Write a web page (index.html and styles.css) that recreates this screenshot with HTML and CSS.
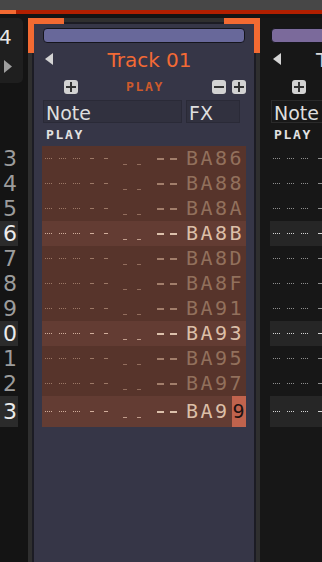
FILE: index.html
```html
<!DOCTYPE html>
<html lang="en">
<head>
    <meta charset="UTF-8">
    <meta name="viewport" content="width=device-width, initial-scale=1.0">
    <title>Tracker</title>
    <link rel="stylesheet" href="styles.css">
</head>
<body>
    <header class="topbar">
        <div class="topbar-fill"></div>
        <div class="topbar-line"><div class="topbar-mark"></div></div>
    </header>
    <main class="main">
        <div class="side">
            <div class="pos-box">
                <div class="pos-num">4</div>
                <svg class="pos-play" width="8" height="13" viewBox="0 0 8 13"><polygon points="0,0 8,6.5 0,13" fill="#9e9e9e"/></svg>
            </div>
            <div class="nums">
                <div class="num">3</div>
                <div class="num">4</div>
                <div class="num">5</div>
                <div class="num hl">6</div>
                <div class="num">7</div>
                <div class="num">8</div>
                <div class="num">9</div>
                <div class="num hl">0</div>
                <div class="num">1</div>
                <div class="num">2</div>
                <div class="num hl last">3</div>
            </div>
        </div>

        <section class="track active">
            <span class="corner left"></span>
            <span class="corner right"></span>
            <div class="track-body">
                <div class="track-color"></div>
                <div class="track-title">
                    <svg class="arrow" width="8" height="12" viewBox="0 0 8 12"><polygon points="8,0 0,6 8,12" fill="#d4d4d4"/></svg>
                    <span class="track-name">Track 01</span>
                </div>
                <div class="track-btns">
                    <svg class="btn" width="14" height="14" viewBox="0 0 14 14"><rect width="14" height="14" rx="3" fill="#d2d2d2"/><path d="M2 7h10M7 2v10" stroke="#333" stroke-width="2"/></svg>
                    <span class="state">PLAY</span>
                    <span class="btn-group">
                        <svg class="btn" width="14" height="14" viewBox="0 0 14 14"><rect width="14" height="14" rx="3" fill="#d2d2d2"/><path d="M2 7h10" stroke="#333" stroke-width="2"/></svg>
                        <svg class="btn" width="14" height="14" viewBox="0 0 14 14"><rect width="14" height="14" rx="3" fill="#d2d2d2"/><path d="M2 7h10M7 2v10" stroke="#333" stroke-width="2"/></svg>
                    </span>
                </div>
                <div class="cols">
                    <div class="col-head note">Note</div>
                    <div class="col-head effect">FX</div>
                </div>
                <div class="play-label">PLAY</div>
                <div class="pattern">
                    <div class="row"><span class="dots"></span><span class="dots"></span><span class="dots"></span><span class="dash"></span><span class="dash"></span><span class="low"></span><span class="low"></span><span class="fxd"></span><span class="fxd"></span><span class="hex">BA86</span></div>
                    <div class="row"><span class="dots"></span><span class="dots"></span><span class="dots"></span><span class="dash"></span><span class="dash"></span><span class="low"></span><span class="low"></span><span class="fxd"></span><span class="fxd"></span><span class="hex">BA88</span></div>
                    <div class="row"><span class="dots"></span><span class="dots"></span><span class="dots"></span><span class="dash"></span><span class="dash"></span><span class="low"></span><span class="low"></span><span class="fxd"></span><span class="fxd"></span><span class="hex">BA8A</span></div>
                    <div class="row hl"><span class="dots"></span><span class="dots"></span><span class="dots"></span><span class="dash"></span><span class="dash"></span><span class="low"></span><span class="low"></span><span class="fxd"></span><span class="fxd"></span><span class="hex">BA8B</span></div>
                    <div class="row"><span class="dots"></span><span class="dots"></span><span class="dots"></span><span class="dash"></span><span class="dash"></span><span class="low"></span><span class="low"></span><span class="fxd"></span><span class="fxd"></span><span class="hex">BA8D</span></div>
                    <div class="row"><span class="dots"></span><span class="dots"></span><span class="dots"></span><span class="dash"></span><span class="dash"></span><span class="low"></span><span class="low"></span><span class="fxd"></span><span class="fxd"></span><span class="hex">BA8F</span></div>
                    <div class="row"><span class="dots"></span><span class="dots"></span><span class="dots"></span><span class="dash"></span><span class="dash"></span><span class="low"></span><span class="low"></span><span class="fxd"></span><span class="fxd"></span><span class="hex">BA91</span></div>
                    <div class="row hl"><span class="dots"></span><span class="dots"></span><span class="dots"></span><span class="dash"></span><span class="dash"></span><span class="low"></span><span class="low"></span><span class="fxd"></span><span class="fxd"></span><span class="hex">BA93</span></div>
                    <div class="row"><span class="dots"></span><span class="dots"></span><span class="dots"></span><span class="dash"></span><span class="dash"></span><span class="low"></span><span class="low"></span><span class="fxd"></span><span class="fxd"></span><span class="hex">BA95</span></div>
                    <div class="row"><span class="dots"></span><span class="dots"></span><span class="dots"></span><span class="dash"></span><span class="dash"></span><span class="low"></span><span class="low"></span><span class="fxd"></span><span class="fxd"></span><span class="hex">BA97</span></div>
                    <div class="row hl last"><span class="dots"></span><span class="dots"></span><span class="dots"></span><span class="dash"></span><span class="dash"></span><span class="low"></span><span class="low"></span><span class="fxd"></span><span class="fxd"></span><span class="hex">BA9<span class="cursor">9</span></span></div>
                </div>
            </div>
        </section>

        <section class="track idle">
            <div class="track-body">
                <div class="track-color"></div>
                <div class="track-title">
                    <svg class="arrow" width="8" height="12" viewBox="0 0 8 12"><polygon points="8,0 0,6 8,12" fill="#d4d4d4"/></svg>
                    <span class="track-name">Track 02</span>
                </div>
                <div class="track-btns">
                    <svg class="btn" width="14" height="14" viewBox="0 0 14 14"><rect width="14" height="14" rx="3" fill="#d2d2d2"/><path d="M2 7h10M7 2v10" stroke="#333" stroke-width="2"/></svg>
                </div>
                <div class="cols">
                    <div class="col-head note">Note</div>
                </div>
                <div class="play-label">PLAY</div>
                <div class="pattern">
                    <div class="row"><span class="dots"></span><span class="dots"></span><span class="dots"></span><span class="dash"></span><span class="dash"></span></div>
                    <div class="row"><span class="dots"></span><span class="dots"></span><span class="dots"></span><span class="dash"></span><span class="dash"></span></div>
                    <div class="row"><span class="dots"></span><span class="dots"></span><span class="dots"></span><span class="dash"></span><span class="dash"></span></div>
                    <div class="row hl"><span class="dots"></span><span class="dots"></span><span class="dots"></span><span class="dash"></span><span class="dash"></span></div>
                    <div class="row"><span class="dots"></span><span class="dots"></span><span class="dots"></span><span class="dash"></span><span class="dash"></span></div>
                    <div class="row"><span class="dots"></span><span class="dots"></span><span class="dots"></span><span class="dash"></span><span class="dash"></span></div>
                    <div class="row"><span class="dots"></span><span class="dots"></span><span class="dots"></span><span class="dash"></span><span class="dash"></span></div>
                    <div class="row hl"><span class="dots"></span><span class="dots"></span><span class="dots"></span><span class="dash"></span><span class="dash"></span></div>
                    <div class="row"><span class="dots"></span><span class="dots"></span><span class="dots"></span><span class="dash"></span><span class="dash"></span></div>
                    <div class="row"><span class="dots"></span><span class="dots"></span><span class="dots"></span><span class="dash"></span><span class="dash"></span></div>
                    <div class="row hl last"><span class="dots"></span><span class="dots"></span><span class="dots"></span><span class="dash"></span><span class="dash"></span></div>
                </div>
            </div>
        </section>
    </main>
</body>
</html>
```

FILE: styles.css
```css
* {
    padding: 0;
    margin: 0;
    box-sizing: border-box;
}

body {
    width: 322px;
    height: 562px;
    overflow: hidden;
    background: #141414;
    color: #dcdcdc;
    font-family: "DejaVu Sans", sans-serif;
}

/* top strip */
.topbar-fill {
    height: 10px;
    background: #474747;
}

.topbar-line {
    height: 4px;
    background: #b11f00;
}

.topbar-mark {
    width: 16px;
    height: 4px;
    background: #f36a32;
}

.main {
    display: flex;
    height: 544px;
    margin-top: 4px;
}

/* row numbers on the left */
.side {
    flex: none;
    width: 23px;
    margin-right: 5px;
}

.pos-box {
    height: 65px;
    padding-top: 8px;
    background: #1f1f1f;
    border-radius: 0 5px 5px 0;
}

.pos-num {
    margin-left: -1px;
    font-size: 20px;
    line-height: 23px;
    color: #e8e8e8;
}

.pos-play {
    display: block;
    margin: 11px 0 0 4px;
}

.nums {
    width: 18px;
    margin-top: 63px;
}

.num {
    height: 25px;
    padding-right: 1px;
    text-align: right;
    font-size: 22px;
    line-height: 25px;
    color: #9c9c9c;
}

.num.hl {
    background: #2b2b2b;
    color: #ececec;
}

.num.last {
    height: 31px;
    line-height: 31px;
}

/* tracks */
.track {
    position: relative;
    flex: none;
    display: flex;
    flex-direction: column;
    width: 232px;
    padding: 4px 4px 0;
    background: #2f2f2f;
}

.track-body {
    flex: 1;
    padding: 4px 8px 0;
    background: #363647;
    border: 2px solid #1c1c24;
    border-bottom: 0;
}

.track.idle {
    padding: 0;
    background: #171717;
}

.idle .track-body {
    padding-top: 8px;
    background: #171717;
    border-color: #171717;
}

.corner {
    position: absolute;
    top: 0;
    width: 36px;
    height: 35px;
    border-top: 6px solid #f36a32;
}

.corner.left {
    left: 0;
    border-left: 6px solid #f36a32;
}

.corner.right {
    right: 0;
    border-right: 6px solid #f36a32;
}

.track-color {
    height: 15px;
    margin: 0 1px;
    background: #68689a;
    border: 1px solid #15151c;
    border-radius: 4px;
}

.idle .track-color {
    background: #7b6a9b;
}

.track-title {
    display: flex;
    height: 24px;
    margin-top: 6px;
}

.arrow {
    flex: none;
    margin: 4px 0 0 3px;
}

.track-name {
    flex: 1;
    text-align: center;
    font-size: 20px;
    line-height: 23px;
    color: #f36a35;
    white-space: nowrap;
}

.idle .track-name {
    flex: none;
    margin-left: 35px;
    color: #dadada;
}

.track-btns {
    display: flex;
    align-items: center;
    height: 14px;
    margin-top: 7px;
}

.btn {
    display: block;
    flex: none;
}

.track-btns > .btn {
    margin-left: 22px;
}

.state {
    flex: 1;
    text-align: center;
    font-family: "DejaVu Sans Mono", monospace;
    font-weight: bold;
    font-size: 13px;
    line-height: 14px;
    letter-spacing: 1.7px;
    color: #cd5a2c;
}

.btn-group {
    display: flex;
    gap: 6px;
}

.cols {
    display: flex;
    height: 23px;
    margin-top: 6px;
}

.col-head {
    height: 23px;
    padding: 2px 0 0 2px;
    overflow: hidden;
    font-size: 19px;
    line-height: 20px;
    color: #dedede;
    background: #31313f;
    border: 1px solid #2a2a37;
}

.col-head.note {
    width: 139px;
    margin-left: 1px;
}

.col-head.effect {
    width: 54px;
    margin-left: 4px;
}

.idle .col-head {
    width: 100px;
    background: #181818;
    border-color: #2a2a2a;
}

.play-label {
    height: 23px;
    padding-left: 4px;
    font-family: "DejaVu Sans Mono", monospace;
    font-weight: bold;
    font-size: 13px;
    line-height: 23px;
    letter-spacing: 1.7px;
    color: #e2e2e2;
}

/* pattern rows */
.pattern {
    background: #57342b;
}

.idle .pattern {
    background: transparent;
}

.row {
    display: flex;
    align-items: center;
    height: 25px;
    color: #9c7866;
}

.row.hl {
    background: #633c33;
    color: #d0ad9b;
}

.row.last {
    height: 31px;
}

.idle .row {
    color: #8e8e8e;
}

.idle .row.hl {
    background: #262626;
    color: #d4d4d4;
}

.row span {
    display: block;
    flex: none;
}

.dots {
    width: 7px;
    height: 1px;
    background: linear-gradient(to right, currentColor 1px, transparent 1px) 0 0 / 2px 1px repeat-x;
}

.dots:first-child {
    margin-left: 3px;
}

.dots + .dots {
    margin-left: 7px;
}

.dash {
    width: 4px;
    height: 1px;
    margin-left: 10px;
    background: currentColor;
}

.low {
    width: 4px;
    height: 1px;
    margin-top: 12px;
    background: currentColor;
    opacity: 0.85;
}

.dash + .low {
    margin-left: 15px;
}

.low + .low {
    margin-left: 10px;
}

.fxd {
    width: 7px;
    height: 2px;
    background: #a27e6b;
}

.low + .fxd {
    margin-left: 16px;
}

.fxd + .fxd {
    margin-left: 6px;
}

.row.hl .fxd {
    background: #dcc0ab;
}

.row .hex {
    display: flex;
    align-items: center;
    align-self: stretch;
    margin-left: 9px;
    font-family: "DejaVu Sans Mono", monospace;
    font-size: 20px;
    line-height: 25px;
    letter-spacing: 2.5px;
    color: #92705c;
}

.row.hl .hex {
    color: #dcbfa8;
}

.row .cursor {
    display: flex;
    align-items: center;
    justify-content: center;
    align-self: stretch;
    width: 14px;
    margin-left: 2px;
    letter-spacing: 0;
    background: #c0634d;
    color: #1d1212;
}
```
